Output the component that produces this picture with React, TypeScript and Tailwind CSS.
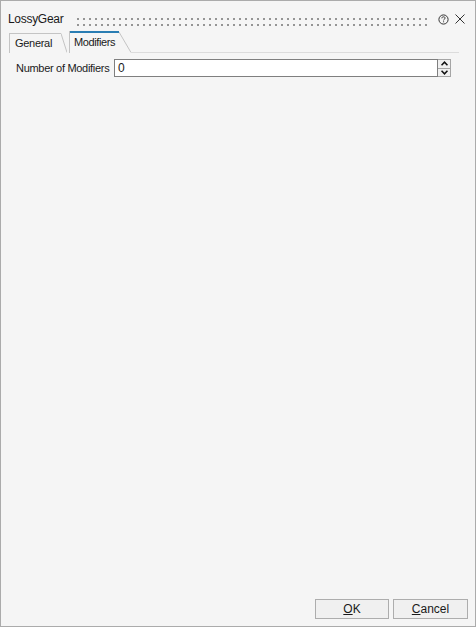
import React from "react";

const font = { fontFamily: '"Liberation Sans", Arial, sans-serif' };

function Grip() {
  return (
    <svg width="352" height="8" className="block">
      <defs>
        <pattern id="grip" x="0" y="0" width="6" height="6" patternUnits="userSpaceOnUse">
          <rect x="0" y="0" width="2" height="2" fill="#959595" />
        </pattern>
      </defs>
      <rect x="0" y="0" width="352" height="8" fill="url(#grip)" />
    </svg>
  );
}

function HelpIcon() {
  return (
    <svg width="11" height="11" viewBox="0 0 11 11" className="block">
      <circle cx="5.5" cy="5.5" r="4.6" fill="none" stroke="#333" strokeWidth="1" />
      <path d="M3.9 4.3 C3.9 3.2 4.6 2.8 5.5 2.8 C6.4 2.8 7.1 3.3 7.1 4.1 C7.1 5.1 5.6 5.2 5.6 6.4" fill="none" stroke="#333" strokeWidth="1" />
      <rect x="5.1" y="7.3" width="1" height="1" fill="#333" />
    </svg>
  );
}

function CloseIcon() {
  return (
    <svg width="10" height="10" viewBox="0 0 10 10" className="block">
      <path d="M0.5 0.5 L9.5 9.5 M9.5 0.5 L0.5 9.5" stroke="#333" strokeWidth="1" />
    </svg>
  );
}

function Arrow({ up }: { up: boolean }) {
  return (
    <svg width="7" height="5" viewBox="0 0 7 5" className="block">
      {up ? (
        <path d="M0.5 4.3 L3.5 1.2 L6.5 4.3" fill="none" stroke="#111" strokeWidth="1.6" />
      ) : (
        <path d="M0.5 0.7 L3.5 3.8 L6.5 0.7" fill="none" stroke="#111" strokeWidth="1.6" />
      )}
    </svg>
  );
}

export default function App() {
  return (
    <div
      className="w-[476px] h-[627px] border border-[#ababab] bg-[#f5f5f5] flex flex-col text-[#1a1a1a]"
      style={font}
    >
      {/* Title bar */}
      <div className="flex items-center h-[20px] mt-[8px] pl-[7px]">
        <span className="text-[12px] tracking-[-0.3px] leading-none">LossyGear</span>
        <div className="ml-[14px] pt-[5px]">
          <Grip />
        </div>
        <div className="ml-[9px]">
          <HelpIcon />
        </div>
        <div className="ml-[6px]">
          <CloseIcon />
        </div>
      </div>

      {/* Tabs */}
      <div className="flex items-end h-[22px] mt-[2px] pl-[8px] pr-[16px]">
        <div className="flex items-stretch h-[20px]">
          <div className="w-[52px] border-l border-t border-[#c4c4c4] pl-[5px] flex items-center text-[11px] tracking-[-0.3px] leading-none">
            General
          </div>
          <svg width="6" height="20" className="block">
            <path d="M0 0.5 L6 19.5" stroke="#c4c4c4" strokeWidth="1" />
          </svg>
        </div>
        <div className="w-[2px]" />
        <div className="flex items-stretch h-[22px]">
          <div className="w-[50px] border-l border-[#c4c4c4] flex flex-col">
            <div className="h-[2px] bg-[#2a7db3]" />
            <div className="flex-1 pl-[4px] flex items-center text-[11px] tracking-[-0.4px] leading-none pb-[1px]">
              Modifiers
            </div>
          </div>
          <svg width="12" height="22" className="block">
            <path d="M0 1 L12 21.5" stroke="#c4c4c4" strokeWidth="1" />
          </svg>
        </div>
        <div className="flex-1 border-b border-[#dcdcdc]" />
      </div>

      {/* Row */}
      <div className="flex items-center h-[18px] mt-[6px] pl-[15px]">
        <span className="text-[11px] tracking-[-0.3px] leading-none w-[98px]">Number of Modifiers</span>
        <div className="w-[324px] h-[18px] border border-[#7f7f7f] bg-white flex items-center pl-[3px] text-[12px] leading-none">
          0
        </div>
        <div className="w-[13px] h-[18px] border border-[#a5a5a5] border-l-0 bg-[#f0f0f0] flex flex-col">
          <div className="flex-1 flex items-center justify-center border-b border-[#a5a5a5]">
            <Arrow up />
          </div>
          <div className="flex-1 flex items-center justify-center">
            <Arrow up={false} />
          </div>
        </div>
      </div>

      <div className="flex-1" />

      {/* Buttons */}
      <div className="flex justify-end gap-[4px] pr-[7px] pb-[7px]">
        <button className="w-[74px] h-[20px] border border-[#adadad] bg-[#f0f0f0] text-[12px] leading-none flex items-center justify-center">
          <span>
            <span className="underline">O</span>K
          </span>
        </button>
        <button className="w-[75px] h-[20px] border border-[#adadad] bg-[#f0f0f0] text-[12px] leading-none flex items-center justify-center">
          <span>
            <span className="underline">C</span>ancel
          </span>
        </button>
      </div>
    </div>
  );
}
